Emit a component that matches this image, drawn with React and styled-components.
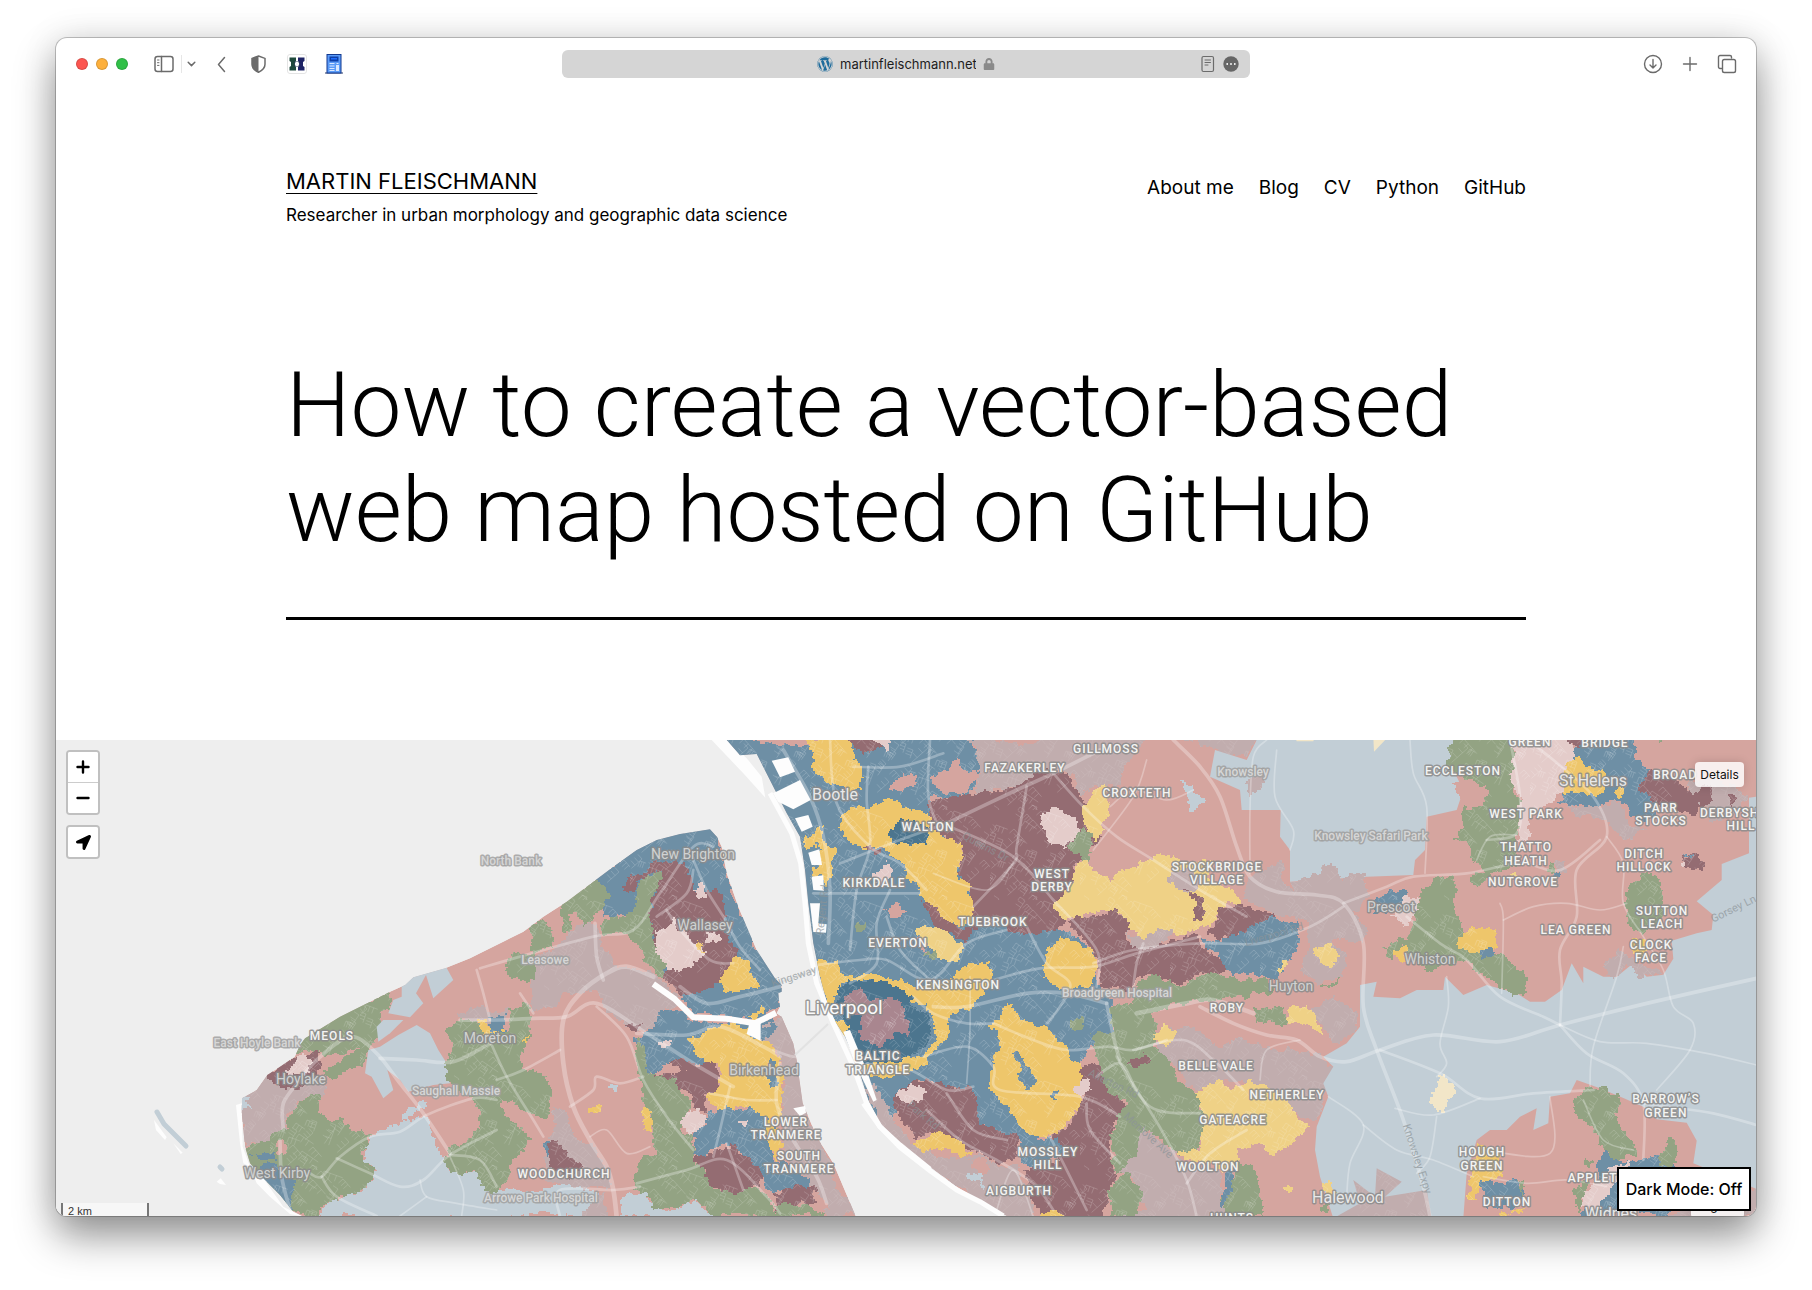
import React from "react";
import styled, { createGlobalStyle } from "styled-components";
import { FaWordpress, FaLock, FaLocationArrow } from "react-icons/fa";

const GlobalStyle = createGlobalStyle`
  * { box-sizing: border-box; }
  body { margin: 0; background: #fff; color: #000; font-family: Inter, "Liberation Sans", sans-serif; }
  button, input { font: inherit; color: inherit; }
  a { color: inherit; }
`;

/* ---------- window ---------- */

const Desktop = styled.div`
  height: 100vh;
  min-height: 900px;
  padding: 38px 56px 74px;
  display: flex;
  overflow: hidden;
`;

const Window = styled.div`
  flex: 1;
  min-width: 0;
  display: flex;
  flex-direction: column;
  background: #fff;
  border-radius: 11px;
  overflow: hidden;
  box-shadow: 0 0 0 1px rgba(0, 0, 0, 0.22), 0 20px 40px rgba(0, 0, 0, 0.42), 0 0 36px rgba(0, 0, 0, 0.1);
`;

const Toolbar = styled.div`
  flex: none;
  height: 52px;
  padding: 0 19px;
  display: grid;
  grid-template-columns: 1fr minmax(300px, 688px) 1fr;
  align-items: center;
  color: #6b6b6b;
`;

const ToolGroup = styled.div`
  display: flex;
  align-items: center;
  justify-content: ${(p) => (p.$end ? "flex-end" : "flex-start")};
  gap: ${(p) => p.$gap || 0}px;
`;

const Lights = styled.div`
  display: flex;
  gap: 8px;
  margin: 0 26px 0 1px;
`;

const Light = styled.button`
  width: 12px;
  height: 12px;
  padding: 0;
  border-radius: 50%;
  border: 1px solid rgba(0, 0, 0, 0.14);
  background: ${(p) => p.$color};
`;

const Tool = styled.button`
  width: ${(p) => p.$w || 20}px;
  height: 20px;
  padding: 0;
  border: 0;
  background: none;
  display: grid;
  place-items: center;
`;

const Divider = styled.span`
  width: 1px;
  height: 18px;
  background: #e6e6e6;
  margin: 0 5px 0 7px;
`;

const Address = styled.div`
  height: 28px;
  border-radius: 6px;
  background: #d5d5d5;
  padding: 0 11px;
  display: grid;
  grid-template-columns: 1fr auto 1fr;
  align-items: center;
`;

const AddressText = styled.div`
  grid-column: 2;
  display: flex;
  align-items: center;
  gap: 7px;
`;

const AddressInput = styled.input`
  width: 136px;
  padding: 0;
  border: 0;
  background: none;
  font-size: 13px;
  line-height: 16px;
  color: #1d1d1d;
`;

/* ---------- page ---------- */

const Wrap = styled.div`
  width: 100%;
  max-width: 1288px;
  margin: 0 auto;
  padding: 0 24px;
`;

const SiteHeader = styled(Wrap).attrs({ as: "header" })`
  padding-top: 75px;
  display: flex;
  justify-content: space-between;
`;

const SiteName = styled.a`
  display: block;
  margin-bottom: 2px;
  font-size: 22px;
  line-height: 32px;
  text-transform: uppercase;
  text-decoration: underline;
  text-decoration-thickness: 1px;
  text-underline-offset: 4px;
`;

const Tagline = styled.p`
  margin: 0;
  font-size: 17px;
  line-height: 32px;
`;

const Nav = styled.nav`
  display: flex;
  gap: 25px;
  padding-top: 8px;
  font-size: 19px;
  line-height: 30px;
  a { text-decoration: none; }
`;

const Entry = styled(Wrap)`
  padding-top: 122px;
  padding-bottom: 120px;
`;

const Title = styled.h1`
  margin: 0;
  padding-bottom: 54px;
  border-bottom: 3px solid #000;
  font-family: Roboto, "Liberation Sans", sans-serif;
  font-size: 91px;
  line-height: 105px;
  font-weight: 300;
`;

/* ---------- map ---------- */

const MapBox = styled.section`
  position: relative;
  flex: 1;
  min-height: 0;
  overflow: hidden;
  background: #eee;
`;

const MapSvg = styled.svg`
  display: block;
  width: 100%;
  height: 100%;
`;

const Controls = styled.div`
  position: absolute;
  left: 10px;
  top: 10px;
  display: grid;
  gap: 10px;
`;

const ControlGroup = styled.div`
  border: 2px solid #c0c0c0;
  border-radius: 4px;
  background: #fff;
  overflow: hidden;
`;

const Control = styled.button`
  width: 30px;
  height: 30px;
  padding: 0;
  border: 0;
  background: #fff;
  color: #000;
  display: grid;
  place-items: center;
  & + & { height: 31px; border-top: 1px solid #ccc; }
`;

const Scale = styled.div`
  position: absolute;
  left: 5px;
  bottom: -4px;
  width: 88px;
  height: 17px;
  padding: 1px 5px;
  border: 2px solid #777;
  border-top: 0;
  background: rgba(255, 255, 255, 0.5);
  font: 11px/14px "Liberation Sans", sans-serif;
  color: #333;
`;

const Chip = styled.button`
  position: absolute;
  right: 12px;
  ${(p) => (p.$low ? "bottom: -2px;" : "top: 22px;")}
  min-width: 49px;
  height: 25px;
  padding: 0 5px;
  border: 0;
  border-radius: 4px;
  background: rgba(255, 255, 255, 0.82);
  box-shadow: 0 0 10px rgba(0, 0, 0, 0.15);
  font-size: 12px;
  color: #111;
`;

const DarkMode = styled.button`
  position: absolute;
  right: 5px;
  bottom: 5px;
  width: 134px;
  height: 44px;
  padding: 0;
  border: 2px solid #000;
  background: #fff;
  font-size: 16px;
  font-weight: 500;
  white-space: nowrap;
`;

const Label = styled.text`
  font-family: Roboto, "Liberation Sans", sans-serif;
  font-size: ${(p) => ({ area: 12, town: 14, big: 16, city: 19, sea: 12, road: 11 }[p.$kind])}px;
  font-weight: ${(p) => (p.$kind === "area" || p.$kind === "sea" ? 500 : 400)};
  letter-spacing: ${(p) => (p.$kind === "area" ? "1px" : "normal")};
  fill: ${(p) => ({ area: "#f4f4f2", town: "#d0d2d2", big: "#e8e8e8", city: "#fafafa", sea: "#d6d6d6", road: "#8c9498" }[p.$kind])};
  stroke: ${(p) => ({ sea: "#a0a0a0", road: "none" }[p.$kind] || "#8b8b8b")};
  stroke-opacity: 0.85;
  stroke-width: 3px;
  stroke-linejoin: round;
  paint-order: stroke;
  text-anchor: middle;
`;

const C = {
  blue: "#6e8fa5", green: "#93a383", pink: "#d5a59f", water: "#c2ced6", mauve: "#c1adae",
  maroon: "#946c72", yellow: "#eec66b", straw: "#efd186", rose: "#e4ccca", navy: "#4c758e",
  plum: "#a9868f", cream: "#f2e6c8",
};

/* Survey sheets: origin of each sheet on the map, and units per map pixel. */
const SHEETS = { w: [50, 730, 3, 3], m: [480, 730, 3, 3], c: [800, 730, 3, 3], e: [1200, 730, 3, 3], f: [1500, 730, 3, 2.8] };

function points(sheet, text) {
  const [ox, oy, sx, sy] = SHEETS[sheet];
  return text.trim().split(/\s+/).map((p) => {
    const [x, y] = p.split(",").map(Number);
    return [ox + x / sx, oy + y / sy];
  });
}

function makeRandom(seed) {
  let s = seed * 2654435761 + 12345;
  return () => {
    s = (Math.imul(s, 1664525) + 1013904223) | 0;
    return (s >>> 0) / 4294967296;
  };
}

function outline(pts, seed) {
  const rnd = makeRandom(seed);
  const out = [];
  const split = (a, b) => {
    const dx = b[0] - a[0];
    const dy = b[1] - a[1];
    const len = Math.hypot(dx, dy);
    if (len < 3) {
      const mx = Math.round(b[0]);
      out.push([mx, Math.round(a[1])], [mx, Math.round(b[1])]);
      return;
    }
    const k = (rnd() - 0.5) * (len > 12 ? 0.18 : 0.75);
    const m = [a[0] + dx / 2 - dy * k, a[1] + dy / 2 + dx * k];
    split(a, m);
    split(m, b);
  };
  pts.forEach((p, i) => split(p, pts[(i + 1) % pts.length]));
  return "M" + out.map((p) => p.join(" ")).join("L") + "Z";
}

const plain = (pts, close = true) => "M" + pts.map((p) => p.map((n) => n.toFixed(1)).join(" ")).join("L") + (close ? "Z" : "");

function curve(pts) {
  let d = `M${pts[0][0]} ${pts[0][1]}`;
  for (let i = 0; i < pts.length - 1; i++) {
    const p0 = pts[i - 1] || pts[i];
    const p1 = pts[i];
    const p2 = pts[i + 1];
    const p3 = pts[i + 2] || p2;
    d += `C${p1[0] + (p2[0] - p0[0]) / 6} ${p1[1] + (p2[1] - p0[1]) / 6} ${p2[0] - (p3[0] - p1[0]) / 6} ${p2[1] - (p3[1] - p1[1]) / 6} ${p2[0]} ${p2[1]}`;
  }
  return d;
}

const LAND = [
  ["m", "-714,1105 -670,1080 -638,1035 -600,1010 -556,980 -540,945 -525,925 -420,860 -270,785 -225,765 -200,742 -105,715 -30,685 0,670 80,630 130,605 190,560 260,515 340,455 400,410 470,360 530,330 600,312 690,298 712,322 725,350 740,430 775,530 800,590 830,660 885,745 905,765 905,785 895,790 900,830 890,850 905,860 940,940 950,990 968,1120 1010,1220 1060,1300 1128,1460 -530,1460 -560,1445 -600,1395 -650,1345 -690,1300 -705,1250 -715,1150"],
  ["c", "-220,30 -180,76 -130,72 -80,170 -40,250 0,320 15,420 25,520 40,640 60,740 90,850 135,920 170,1000 205,1110 240,1180 300,1250 390,1310 470,1370 560,1425 625,1460 2900,1460 2900,30"],
];

const REGIONS = [
  // Wirral, west
  ["w", "mauve", "570,1100 652,1030 690,1070 790,1040 825,1060 820,1100 770,1100 740,1130 710,1165 708,1205 660,1235 583,1250 575,1150"],
  ["w", "water", "570,1108 600,1103 607,1138 578,1140"],
  ["w", "green", "725,990 755,915 890,840 1020,775 1025,810 990,870 975,940 950,970 940,1010 880,1025 850,1050 820,1020 810,960 770,960"],
  ["w", "pink", "805,990 860,965 930,955 900,975 860,1000 820,1020"],
  ["w", "maroon", "640,1035 730,985 800,960 812,1000 790,1050 710,1080 670,1060"],
  ["w", "rose", "705,1020 740,1000 755,970 790,1000 780,1030 720,1040"],
  ["w", "green", "575,1250 640,1235 680,1205 710,1205 712,1160 770,1100 810,1095 805,1150 830,1170 880,1165 900,1190 965,1215 945,1260 940,1290 975,1310 970,1350 930,1385 870,1400 820,1430 800,1465 720,1450 630,1345 585,1300"],
  ["w", "blue", "598,1273 675,1270 680,1292 630,1288"],
  ["w", "blue", "660,1300 680,1300 695,1340 735,1350 722,1400 730,1440 690,1430 620,1335 630,1318"],
  ["w", "pink", "685,1230 705,1230 712,1270 675,1272"],
  ["w", "water", "1055,755 1090,735 1185,705 1210,750 1150,805 1128,735 1098,790 1120,820 1080,862 1015,850 1030,810 1055,800", 1],
  ["w", "water", "980,890 1000,870 1060,870 1020,910 985,935", 1],
  ["w", "water", "990,950 1045,915 1100,885 1140,910 1165,960 1190,1000 1200,1060 1150,1065 1075,1085 1050,1050 1012,1020 1030,1080 1000,1105 965,1040 945,1030 955,960", 1],
  ["w", "water", "965,1215 1060,1170 1130,1160 1170,1270 1200,1325 1280,1325 1330,1365 1345,1380 1420,1385 1480,1375 1600,1365 1650,1400 1600,1465 800,1465 830,1420 930,1385 970,1350 975,1310 940,1290 945,1250"],
  ["w", "water", "1055,1165 1080,1130 1130,1120 1120,1135 1075,1160"],
  // Wirral, centre
  ["m", "mauve", "-70,850 0,830 60,850 90,830 60,900 -20,870"],
  ["m", "green", "-90,890 -60,865 0,880 10,905 80,905 85,835 145,822 150,880 155,920 120,980 140,1025 200,1040 215,1090 205,1165 165,1160 130,1140 100,1110 60,1110 60,1130 110,1190 155,1230 120,1270 80,1340 40,1395 0,1370 -10,1325 -85,1330 -110,1290 -100,1260 -40,1240 0,1180 -5,1130 -20,1100 -80,1090 -95,1020"],
  ["m", "blue", "25,860 80,850 80,905 30,905"],
  ["m", "yellow", "-8,868 20,870 30,905 75,905 10,912"],
  ["m", "mauve", "165,680 240,640 330,570 360,600 365,640 410,680 400,705 500,720 560,770 600,800 590,830 545,850 540,890 500,900 430,880 390,850 350,780 290,790 250,790 230,830 150,840 155,780"],
  ["m", "green", "80,690 110,665 160,670 165,750 100,755 80,730"],
  ["m", "green", "240,510 345,450 395,480 380,530 340,560 310,590 290,545 265,545 275,600 250,605"],
  ["m", "green", "150,590 190,565 215,620 220,655 155,662"],
  ["m", "blue", "345,450 470,340 600,300 700,280 740,430 775,530 830,660 920,745 905,785 900,830 830,870 740,860 640,845 600,790 560,740 500,640 460,560 370,560 390,490"],
  ["m", "green", "365,580 460,545 470,490 480,450 530,420 560,440 530,480 515,540 530,640 560,690 550,745 500,700 470,640 430,610 365,625"],
  ["m", "maroon", "430,480 440,440 490,430 510,400 590,395 640,440 650,490 710,475 735,550 730,590 760,650 770,680 730,740 700,780 640,790 600,795 550,740 570,700 530,650 520,590 505,545 525,490 550,440 530,420 480,450 465,485"],
  ["m", "rose", "525,600 560,590 580,562 600,600 650,640 680,670 640,700 600,725 560,710 530,650"],
  ["m", "rose", "680,600 720,610 710,640 680,640"],
  ["m", "rose", "640,480 655,460 680,505 650,490"],
  ["m", "yellow", "720,740 760,680 800,690 840,770 780,785 730,780"],
  ["m", "yellow", "650,630 668,640 675,668 660,660"],
  ["m", "blue", "540,840 610,835 620,870 700,880 880,870 900,900 840,935 700,1000 560,1000 500,1040 490,960 460,920 520,890"],
  ["m", "yellow", "805,860 850,820 855,840 830,870"],
  ["m", "maroon", "430,885 490,880 470,905"],
  ["m", "mauve", "845,885 915,850 950,940 980,1120 1010,1220 1150,1465 1040,1455 1000,1370 920,1280 900,1180 910,1050 890,960 840,935"],
  ["m", "blue", "840,905 870,880 900,890 850,935"],
  ["m", "yellow", "620,925 700,890 750,880 800,895 810,920 880,940 890,980 905,1010 915,1050 905,1120 900,1180 830,1160 800,1130 730,1140 690,1120 680,1090 720,1060 720,1010 680,995 640,960"],
  ["m", "blue", "855,1010 870,985 885,1010 905,1060 870,1070"],
  ["m", "rose", "535,935 575,935 550,955"],
  ["m", "green", "470,1000 475,920 500,1030 580,1045 600,1085 640,1110 620,1150 600,1200 640,1220 640,1290 700,1370 830,1375 880,1410 890,1465 700,1465 650,1410 600,1430 520,1440 500,1400 460,1380 480,1290 530,1260 510,1170 490,1060"],
  ["m", "maroon", "520,1040 590,1028 620,1020 560,1000 600,985 640,1000 700,1000 720,1040 710,1080 670,1090 680,1150 640,1130 630,1090 600,1080 590,1045"],
  ["m", "blue", "640,1210 680,1180 690,1140 820,1140 880,1180 880,1290 920,1300 990,1350 980,1380 870,1380 800,1290 740,1240 660,1290 640,1270"],
  ["m", "rose", "600,1180 620,1145 660,1140 680,1170 670,1190 630,1215"],
  ["m", "rose", "770,1180 810,1170 800,1185"],
  ["m", "yellow", "860,1170 895,1200 910,1240 890,1300 875,1260"],
  ["m", "maroon", "640,1290 700,1275 750,1238 800,1280 850,1340 840,1370 760,1390 700,1370"],
  ["m", "maroon", "880,1390 1000,1365 1010,1420 950,1430 900,1450"],
  ["m", "green", "880,1420 960,1430 1030,1440 1030,1465 880,1465"],
  ["m", "pink", "1000,1380 1020,1400 1050,1440 1030,1440"],
  ["m", "mauve", "200,1250 230,1180 220,1130 260,1150 290,1230 340,1250 380,1310 380,1380 330,1370 200,1360 190,1280"],
  ["m", "maroon", "200,1240 230,1230 250,1260 310,1310 270,1350 205,1310"],
  ["m", "blue", "190,1240 210,1230 200,1280"],
  ["m", "yellow", "490,1130 515,1150 515,1205 490,1200"],
  ["m", "yellow", "325,1135 365,1130 345,1150"],
  ["m", "yellow", "125,935 150,915 140,940"],
  ["m", "water", "385,1068 412,1065 405,1087"],
  ["m", "water", "430,1400 500,1390 520,1440 650,1410 700,1465 420,1465"],
  ["m", "mauve", "310,1465 340,1400 375,1390 380,1465"],
  // Liverpool
  ["c", "blue", "-240,20 505,20 550,110 500,200 390,200 470,380 520,600 620,560 760,600 830,620 890,680 890,760 940,820 945,910 870,950 840,1010 700,1250 560,1200 500,1080 350,1050 290,1150 240,1190 150,1000 70,850 20,640 0,420 -60,250"],
  ["c", "mauve", "505,20 1040,20 1000,80 950,170 900,170 840,200 820,130 760,125 640,170 520,200 540,110"],
  ["c", "pink", "390,140 450,110 470,85 490,120 540,120 500,190 430,190"],
  ["c", "maroon", "385,210 540,185 640,170 700,130 800,130 830,180 850,220 900,330 830,400 820,460 760,530 800,570 760,600 700,610 620,600 610,560 520,600 500,530 510,480 470,430 490,350 400,300"],
  ["c", "rose", "720,255 770,235 830,260 840,310 800,355 740,330"],
  ["c", "straw", "845,240 890,175 920,170 915,300 890,335 860,300"],
  ["c", "green", "805,350 850,290 880,320 875,370 850,395"],
  ["c", "straw", "830,400 860,390 930,455 1040,390 1080,370 1120,375 1150,400 1240,390 1230,450 1300,480 1340,540 1280,520 1240,580 1160,605 1030,635 990,600 960,550 900,545 800,570 760,530 820,460"],
  ["c", "mauve", "1100,440 1160,410 1200,460 1180,485 1140,480"],
  ["c", "maroon", "1150,480 1200,500 1210,570 1180,570 1190,520"],
  ["c", "maroon", "800,570 940,540 980,570 990,640 1080,640 1180,610 1200,640 1270,690 1280,720 1220,730 1140,770 1060,735 1010,745 990,780 900,770 890,680 850,620"],
  ["c", "mauve", "980,600 1030,630 1070,595 1120,610 1060,650 1000,655"],
  ["c", "maroon", "360,510 400,520 470,590 515,600 500,640 460,610 400,580"],
  ["c", "yellow", "-5,20 150,20 160,90 190,110 185,180 160,185 100,160 45,130 40,70"],
  ["c", "maroon", "145,20 240,20 250,50 190,80 170,60"],
  ["c", "rose", "205,20 265,20 260,65"],
  ["c", "pink", "270,165 310,130 350,130 350,160 310,185 270,180"],
  ["c", "yellow", "120,260 150,230 230,225 260,205 300,220 390,260 400,300 490,350 470,430 510,480 515,580 480,590 430,560 370,500 360,470 315,440 310,400 250,350 200,360 150,340 120,300"],
  ["c", "navy", "265,310 300,265 390,290 380,345 320,340 280,340"],
  ["c", "maroon", "190,352 250,352 222,370"],
  ["c", "yellow", "50,290 70,285 75,340 110,360 100,390 80,470 60,400"],
  ["c", "yellow", "15,315 45,310 50,355 20,360"],
  ["c", "yellow", "35,410 75,405 75,435 38,438"],
  ["c", "rose", "215,430 250,415 260,390 275,430 250,475 220,465"],
  ["c", "pink", "250,540 290,515 320,545 290,565"],
  ["c", "green", "170,575 200,575 185,605"],
  ["c", "straw", "345,600 390,585 430,600 490,650 475,695 420,685 380,650"],
  ["c", "pink", "350,620 385,640 380,675 355,650"],
  ["c", "green", "370,675 405,660 405,690"],
  ["c", "yellow", "40,700 110,690 120,730 230,735 300,745 340,770 450,745 515,700 570,700 575,760 540,800 500,840 445,870 440,930 400,970 390,1000 330,1025 240,1040 210,1040 180,1000 360,980 400,940 400,880 380,820 340,820 300,780 200,750 130,760 100,800 90,840 60,780"],
  ["c", "navy", "110,780 160,750 240,750 340,800 340,830 385,850 385,940 340,970 290,1000 170,1000 150,940 130,870 115,840"],
  ["c", "plum", "130,820 180,770 215,810 300,810 320,870 325,920 290,905 250,950 190,940 175,900 190,860 140,840"],
  ["c", "yellow", "85,860 150,890 125,920"],
  ["c", "yellow", "740,650 800,625 880,660 890,700 870,770 800,785 730,740"],
  ["c", "green", "810,870 850,860 845,900 815,895"],
  ["c", "yellow", "565,885 600,860 620,820 660,870 740,890 800,950 810,990 870,1030 850,1080 840,1130 780,1200 740,1225 690,1215 650,1170 600,1110 565,1070 585,1000 600,930 585,895"],
  ["c", "blue", "635,970 660,965 680,1010 710,1050 690,1080 650,1050 660,1010"],
  ["c", "blue", "750,1095 775,1080 770,1110"],
  ["c", "mauve", "190,1080 240,1190 300,1270 390,1330 600,1465 700,1465 690,1400 660,1310 600,1310 540,1270 430,1280 330,1230 280,1170 225,1060"],
  ["c", "maroon", "280,1100 340,1050 400,1060 500,1065 530,1110 530,1160 560,1190 600,1190 650,1215 650,1280 600,1310 540,1260 460,1250 400,1210 350,1230 300,1170"],
  ["c", "rose", "285,1100 330,1060 380,1075 370,1100 320,1120"],
  ["c", "blue", "530,1140 570,1115 620,1140 660,1200 625,1215 585,1190 545,1185"],
  ["c", "yellow", "340,1240 430,1205 470,1230 520,1270 480,1280 440,1255 370,1270"],
  ["c", "pink", "505,1290 550,1280 570,1320 540,1340"],
  ["c", "water", "500,1330 540,1330 550,1380"],
  ["c", "maroon", "845,1010 900,990 920,1060 980,1130 950,1170 930,1260 950,1340 920,1400 900,1465 740,1465 690,1400 670,1320 780,1290 740,1225 800,1190 850,1110"],
  ["c", "blue", "660,1240 770,1220 790,1270 700,1310 665,1300"],
  ["c", "rose", "820,1075 860,1045 875,1080 840,1095"],
  ["c", "yellow", "720,1455 760,1440 800,1465 720,1465"],
  ["c", "green", "870,910 945,905 930,830 1000,820 1010,760 1060,735 1140,770 1220,730 1400,740 1420,790 1280,800 1060,850 1070,900 1060,950 1110,980 1130,1050 1200,1100 1210,1200 1180,1270 1130,1270 1050,1200 1020,1270 960,1330 930,1290 950,1170 980,1130 910,1050 890,980"],
  ["c", "maroon", "980,1000 1030,965 1050,1000 1000,1010"],
  ["c", "mauve", "1065,940 1110,890 1180,890 1250,950 1320,920 1410,960 1550,970 1580,1010 1610,1010 1570,1100 1550,1170 1480,1150 1330,1050 1200,1085 1170,1070 1120,1000"],
  ["c", "straw", "1060,930 1090,880 1130,910 1100,950"],
  ["c", "mauve", "1030,1190 1100,1250 1150,1300 1260,1330 1280,1465 930,1465 1040,1440 1000,1350 960,1330 1010,1270"],
  ["c", "green", "920,1380 980,1320 1030,1400 1000,1465 930,1465"],
  ["c", "straw", "1180,1090 1260,1050 1290,1080 1340,1050 1400,1070 1460,1110 1500,1170 1530,1190 1480,1240 1415,1275 1380,1240 1310,1260 1320,1290 1270,1335 1220,1300 1130,1270 1200,1260 1210,1200 1200,1120"],
  ["c", "green", "1270,1400 1310,1290 1360,1310 1380,1390 1390,1465 1270,1465"],
  ["c", "blue", "1265,1400 1280,1320 1310,1320 1300,1380 1260,1440"],
  // Knowsley
  ["e", "mauve", "-60,20 180,20 140,80 0,45"],
  ["e", "water", "175,20 765,20 750,100 790,180 770,240 680,260 675,360 645,390 640,435 500,440 270,455 270,360 240,320 242,240 125,240 120,180 30,140 45,60 140,90", 1],
  ["e", "mauve", "135,160 175,120 200,130 195,160 150,200"],
  ["c", "water", "1140,150 1175,165 1180,190 1215,205 1175,245 1165,200"],
  ["e", "cream", "520,20 565,20 522,65", 1],
  ["e", "cream", "285,20 345,20 340,34 290,34", 1],
  ["e", "mauve", "150,440 245,390 250,455 290,490 270,455 390,400 430,450 490,420 510,500 460,545 500,600 490,640 400,630 440,680 430,740 350,770 300,720 310,690 320,570 250,560 180,530 130,510"],
  ["e", "maroon", "20,610 60,530 130,530 220,550 210,590 120,610 60,635"],
  ["e", "blue", "-10,620 60,635 140,600 220,560 300,580 295,650 260,700 225,750 150,730 80,720 60,680"],
  ["e", "straw", "340,655 380,640 420,680 400,710 360,700"],
  ["e", "straw", "230,720 245,690 260,690 240,735"],
  ["e", "green", "360,770 420,740 400,770"],
  ["e", "green", "160,830 250,830 262,885 170,880"],
  ["e", "mauve", "320,840 400,795 470,850 470,900 410,940 370,890"],
  ["e", "straw", "260,840 320,825 360,890 370,915 300,880 265,880"],
  ["e", "water", "480,765 530,755 520,800 600,805 650,780 730,780 735,740 790,795 860,765 950,790 990,815 1035,815 1085,780 1115,700 1150,760 1150,710 1210,740 1250,740 1300,700 1340,740 1390,734 1420,686 1415,632 1490,610 1535,600 1540,555 1490,514 1565,450 1565,402 1647,370 1647,203 1690,198 1690,1385 1480,1300 1490,1232 1460,1178 1370,1168 1330,1130 1270,1104 1200,1075 1130,1050 1110,1090 1050,1100 1045,1180 1000,1200 1010,1135 960,1160 920,1200 870,1200 830,1230 800,1330 790,1465 400,1465 360,1340 345,1260 350,1190 385,1100 370,1060 400,1010 370,980 440,940 480,890", 1],
  ["e", "cream", "715,1035 750,1060 775,1085 740,1110 735,1150 710,1140 690,1120 705,1080"],
  ["e", "mauve", "460,1350 525,1400 530,1315 605,1355 555,1400 680,1380 695,1465 400,1465 480,1420", 1],
  ["e", "straw", "365,1360 400,1360 410,1385 380,1395"],
  ["e", "straw", "250,1370 280,1375 265,1390"],
  ["e", "green", "360,1430 390,1425 385,1450"],
  // St Helens
  ["e", "green", "760,20 940,20 950,110 940,180 965,230 960,290 945,320 950,410 870,430 820,400 805,340 760,325 790,280 790,230 810,190 800,160 745,110"],
  ["e", "pink", "755,160 800,150 860,180 850,220 800,240"],
  ["e", "green", "810,440 870,425 850,460 820,460"],
  ["e", "rose", "945,20 1110,20 1130,70 1100,170 1060,220 1000,240 985,330 950,330 960,220 935,160"],
  ["e", "blue", "1130,20 1305,20 1310,90 1350,120 1330,180 1370,210 1370,260 1330,280 1290,240 1240,210 1190,235 1130,225 1070,215 1110,170 1120,80"],
  ["e", "maroon", "1105,20 1150,20 1140,55"],
  ["e", "yellow", "1115,90 1140,80 1160,110 1220,130 1215,180 1190,200 1130,190 1090,185"],
  ["e", "yellow", "1245,180 1275,165 1265,205"],
  ["e", "mauve", "1100,230 1200,235 1260,215 1300,290 1340,300 1280,330 1220,270 1130,260"],
  ["f", "maroon", "415,160 450,108 500,120 560,170 630,150 645,190 580,240 520,220 470,200"],
  ["f", "mauve", "560,150 640,130 700,150 740,200 700,240 640,260 600,210"],
  ["f", "maroon", "570,180 630,155 640,200 610,220"],
  ["f", "maroon", "685,180 712,185 695,215"],
  ["f", "green", "425,20 510,20 480,36"],
  ["e", "blue", "520,510 560,490 620,485 640,520 590,540 520,550"],
  ["e", "rose", "600,500 650,500 660,560 610,590 570,555 600,535"],
  ["e", "green", "660,490 700,450 765,435 760,520 790,620 830,660 900,670 975,740 980,790 940,800 880,750 800,690 770,700 680,725 640,680 610,640 640,580"],
  ["e", "green", "545,650 600,620 630,640 580,690"],
  ["e", "yellow", "580,660 620,650 610,700"],
  ["e", "yellow", "775,620 820,590 880,600 895,655 820,670 775,650"],
  ["e", "blue", "840,660 880,650 870,680 845,690"],
  ["e", "straw", "925,435 945,420 960,440"],
  ["e", "green", "1045,395 1060,400 1065,430 1040,425"],
  ["e", "mauve", "1065,390 1095,395 1100,430 1075,440"],
  ["e", "blue", "1062,428 1082,425 1075,442"],
  ["f", "green", "385,440 420,405 465,400 490,470 480,540 430,575 390,550"],
  ["f", "mauve", "310,660 360,610 400,640 410,655 490,680 415,695 390,660 350,690 315,690"],
  ["f", "yellow", "390,590 440,590 440,635 400,625"],
  ["f", "maroon", "545,350 580,345 610,370 610,395 560,385"],
  ["f", "rose", "533,380 550,370 552,392"],
  ["f", "blue", "545,348 580,346 575,358"],
  // Widnes
  ["e", "green", "1120,1110 1150,1080 1220,1075 1265,1110 1250,1170 1290,1230 1310,1280 1240,1290 1180,1200 1120,1150"],
  ["e", "blue", "1195,1290 1215,1255 1240,1290 1400,1280 1450,1330 1400,1465 1130,1465 1200,1380"],
  ["e", "rose", "1150,1380 1230,1310 1290,1290 1260,1340 1220,1400 1180,1440 1140,1420"],
  ["e", "green", "1125,1430 1130,1370 1160,1350 1140,1450"],
  ["e", "green", "1155,1285 1185,1290 1170,1320"],
  ["f", "green", "470,1200 510,1140 540,1180 520,1220 480,1220"],
  ["e", "yellow", "830,1240 900,1260 910,1340 850,1350 830,1410 800,1400 815,1330"],
  ["e", "blue", "840,1350 950,1350 970,1400 930,1440 860,1440"],
  ["e", "green", "950,1350 975,1370 970,1400"],
  ["e", "yellow", "900,1462 980,1430 970,1450"],
  ["e", "mauve", "1400,1465 1550,1400 1690,1375 1690,1465"],
];

const ROADS = [
  ["e", 3, "-80,30 0,110 60,200 110,350 150,440 230,485 350,495 430,520 490,640 490,830 530,960 610,1170 670,1370 690,1460"],
  ["e", 3, "0,830 100,880 200,915 290,930 360,980 440,995 540,960 700,915 900,935 1080,885 1340,820 1670,745"],
  ["e", 2, "540,960 720,1030 840,1105 1000,1090 1180,1080"],
  ["e", 2, "430,520 560,470 640,440 800,430 960,400 1080,420 1200,330"],
  ["e", 2, "430,530 330,590 180,640 0,640 -200,660 -320,700"],
  ["e", 2, "1080,885 1085,760 1080,660 1130,560 1130,420 1220,320 1180,200 1060,90 980,30"],
  ["e", 2, "1080,885 1160,970 1270,1030 1330,1120 1330,1290"],
  ["e", 1, "1080,885 1200,935 1340,940 1520,970 1670,1005"],
  ["e", 1, "1170,1070 1180,950 1250,740 1270,650"],
  ["e", 2, "1670,1185 1540,1150 1400,1130 1330,1120"],
  ["e", 1, "1220,320 1270,400 1270,520 1330,620 1390,720 1420,830 1480,880 1470,960 1370,1080"],
  ["e", 1, "910,570 1000,530 1100,520 1200,540 1280,520"],
  ["e", 1, "905,790 910,570 900,520"],
  ["e", 2, "620,560 720,640 800,690 900,800 1030,860 1080,885"],
  ["e", 1, "630,30 640,130 680,230 675,430"],
  ["e", 1, "740,740 745,830 720,940 740,1000 710,1040"],
  ["e", 1, "200,30 160,80 150,240 150,430"],
  ["e", 1, "230,60 225,200 280,300 270,360"],
  ["e", 1, "385,1100 490,1185 450,1300 440,1400"],
  ["e", 1, "490,1185 590,1260 700,1290 820,1340"],
  ["e", 1, "585,1135 700,1155 840,1105"],
  ["e", 1, "710,1160 690,1280 650,1330"],
  ["e", 2, "860,330 950,310 960,200 930,30"],
  ["e", 1, "830,390 870,320 950,315"],
  ["e", 1, "850,1260 1050,1270 1050,1100"],
  ["e", 1, "850,1340 980,1360 1100,1350 1220,1370"],
  ["e", 1, "1150,1110 1210,1230 1300,1260"],
  ["c", 3, "440,280 650,180 760,130 900,60"],
  ["c", 2, "450,290 640,380 760,510 890,660 890,770"],
  ["c", 2, "680,170 650,350 640,400 520,530"],
  ["c", 2, "120,400 300,330 440,280"],
  ["c", 1, "400,430 560,480 640,400"],
  ["c", 2, "760,130 850,230 950,320 1060,390 1200,480 1340,560"],
  ["c", 1, "930,230 1000,180 1100,210 1180,180"],
  ["c", 1, "880,360 1000,200 1040,90"],
  ["c", 3, "-50,60 30,200 70,320 90,480 85,640"],
  ["c", 2, "90,30 110,220 210,350 300,400 380,480"],
  ["c", 2, "160,110 300,110 430,70"],
  ["c", 2, "205,110 200,210 210,350 170,480 150,660"],
  ["c", 2, "390,30 385,200 420,300"],
  ["c", 2, "270,480 230,580 230,700 150,760"],
  ["c", 2, "40,490 250,490 360,490"],
  ["c", 2, "50,705 180,690 260,690 390,750 500,640 620,600"],
  ["c", 2, "260,560 300,660 390,750"],
  ["c", 3, "400,830 500,830 680,790 800,790 920,820"],
  ["c", 3, "920,820 945,940 960,990"],
  ["c", 2, "580,750 720,715 880,710 1010,670 1200,620"],
  ["c", 2, "340,800 400,850 500,880 580,880"],
  ["c", 1, "510,740 510,900 500,1060"],
  ["c", 2, "580,880 700,930 800,960 920,950 1000,960 1100,930"],
  ["c", 2, "680,590 740,700 810,760 780,830 740,880"],
  ["c", 2, "370,980 500,950 580,1010 600,1080 840,1100 960,1160"],
  ["c", 2, "200,1000 330,1020 440,1080 520,1070"],
  ["c", 2, "440,1090 520,1200 620,1230"],
  ["c", 2, "380,1140 480,1230 590,1290 700,1360 760,1440"],
  ["c", 2, "750,1220 810,1340 860,1440"],
  ["c", 2, "860,1120 870,1200 960,1300"],
  ["c", 2, "950,980 1050,1130 1200,1150"],
  ["c", 2, "890,1040 960,1000 1010,1080 1090,1210 1160,1350 1190,1460"],
  ["c", 2, "1160,1360 1230,1270 1340,1200"],
  ["c", 1, "590,1440 640,1320 700,1460"],
  ["c", 4, "1010,850 1160,820 1240,810 1360,850"],
  ["c", 2, "1000,770 1010,700 1030,640"],
  ["c", 2, "1000,960 1150,930 1250,1000 1330,1080"],
  ["c", 1, "1380,1050 1400,960 1500,930"],
  ["m", 3, "-60,870 60,870 160,865 260,860 350,820 500,910 640,1000 760,1070"],
  ["m", 4, "520,740 440,710 380,730 300,790 250,870 250,1000 280,1130 330,1230 380,1310 400,1380 410,1460"],
  ["m", 2, "0,715 120,680 340,620 460,600 540,490 640,350 700,350"],
  ["m", 3, "345,580 350,680 370,750"],
  ["m", 3, "600,770 680,820 780,800 900,770"],
  ["m", 2, "640,390 680,480 730,560 780,650 840,720"],
  ["m", 2, "560,540 600,600 690,690 760,700"],
  ["m", 2, "530,560 620,490 640,420"],
  ["m", 2, "350,830 440,920 490,1050 560,1160 640,1260"],
  ["m", 3, "470,910 620,915 720,890 850,950 900,980"],
  ["m", 2, "20,910 80,1040 160,1170 190,1220"],
  ["m", 2, "50,1050 130,1020 240,960"],
  ["m", 2, "270,1130 340,1080 350,1040 420,1060 490,1040"],
  ["m", 1, "330,1220 380,1200 440,1270 510,1250"],
  ["m", 2, "750,1070 720,1200 700,1280"],
  ["m", 3, "900,1000 890,1120 940,1230 1010,1340 1040,1420"],
  ["m", 2, "690,1090 800,1110 890,1110"],
  ["m", 2, "470,1360 620,1320 740,1290 860,1400 900,1450"],
  ["m", 2, "740,1240 790,1380"],
  ["m", 2, "120,790 160,850"],
  ["m", 2, "1000,980 940,980 880,960"],
  ["m", 2, "240,1460 240,1380 400,1380 480,1370"],
  ["w", 3, "700,1200 700,1120 750,1050 800,990 900,920 980,970 1050,1060 1120,1150 1200,1270"],
  ["w", 3, "690,1230 695,1340 720,1440"],
  ["w", 2, "780,1330 815,1340 870,1280 960,1220 1050,1205 1130,1155 1270,1105 1340,1110"],
  ["w", 2, "815,1340 860,1400 980,1458"],
  ["w", 2, "860,1285 960,1330 1050,1370 1120,1350 1200,1275 1340,1200"],
  ["w", 3, "990,985 1100,990 1210,995 1320,940"],
  ["w", 2, "1280,720 1300,790 1320,870"],
  ["w", 1, "1110,1350 1130,1400 1220,1420 1340,1440"],
  ["w", 1, "1050,1458 1130,1400"],
  ["w", 1, "1200,1280 1240,1380 1235,1458"],
  ["w", 2, "1340,1370 1290,1290 1200,1275"],
];

const WHITE = [
  ["m", "695,30 740,30 800,85 845,140 856,203 790,130"],
  ["m", "830,60 850,65 940,130 905,150 860,110"],
  ["m", "775,30 895,30 880,42 800,42"],
  ["m", "875,92 925,82 945,125 900,142"],
  ["m", "880,190 960,150 992,210 940,238 895,215"],
  ["m", "945,265 985,255 998,290 965,305"],
  ["m", "985,368 1018,358 1026,405 995,405"],
  ["m", "995,440 1030,436 1032,482 1000,480"],
  ["m", "990,520 1020,520 1015,580 1040,583 1038,608 1000,606"],
  ["m", "1090,905 1110,900 1160,1020 1190,1110 1180,1115 1130,1010"],
  ["m", "810,872 842,872 842,933 800,912"],
  ["m", "940,1135 975,1128 978,1148 960,1158"],
  ["w", "558,1125 575,1120 578,1250 600,1310 580,1300 570,1240"],
  ["w", "600,1310 640,1345 700,1430 760,1460 720,1452 660,1400 620,1360"],
  ["w", "312,1170 350,1222 345,1230 318,1200"],
  ["w", "370,1240 398,1268 392,1272"],
  ["w", "500,1355 512,1345 528,1365 510,1362"],
];

const WHITE_LINES = [
  ["m", 5, "870,190 935,310 962,400 975,520 985,640 1010,760 1060,880 1120,1010 1160,1120 1200,1190 1260,1245 1350,1318"],
  ["c", 5, "190,1120 240,1190 300,1252 390,1322 470,1380 540,1415 610,1458"],
  ["m", 6, "520,762 585,808 640,862 740,866 825,880 888,848"],
];

const LABELS = [
  ["area", 332, 1040, "MEOLS"], ["sea", 257, 1047, "East Hoyle Bank"], ["town", 301, 1084, "Hoylake"],
  ["town", 277, 1178, "West Kirby"], ["sea", 456, 1095, "Saughall Massie"], ["sea", 511, 865, "North Bank"],
  ["town", 693, 859, "New Brighton"], ["town", 705, 930, "Wallasey"], ["sea", 545, 964, "Leasowe"],
  ["town", 490, 1043, "Moreton"], ["town", 764, 1075, "Birkenhead"], ["area", 786, 1126, "LOWER"],
  ["area", 786, 1139, "TRANMERE"], ["area", 799, 1160, "SOUTH"], ["area", 799, 1173, "TRANMERE"],
  ["area", 564, 1178, "WOODCHURCH"], ["sea", 541, 1202, "Arrowe Park Hospital"], ["big", 835, 800, "Bootle"],
  ["city", 844, 1014, "Liverpool"], ["area", 878, 1060, "BALTIC"], ["area", 878, 1074, "TRIANGLE"],
  ["area", 874, 887, "KIRKDALE"], ["area", 898, 947, "EVERTON"], ["area", 928, 831, "WALTON"],
  ["area", 958, 989, "KENSINGTON"], ["area", 1025, 772, "FAZAKERLEY"], ["area", 1106, 753, "GILLMOSS"],
  ["area", 1137, 797, "CROXTETH"], ["area", 1052, 878, "WEST"], ["area", 1052, 891, "DERBY"],
  ["area", 993, 926, "TUEBROOK"], ["sea", 1117, 997, "Broadgreen Hospital"], ["area", 1227, 1012, "ROBY"],
  ["area", 1216, 1070, "BELLE VALE"], ["area", 1233, 1124, "GATEACRE"], ["area", 1208, 1171, "WOOLTON"],
  ["area", 1048, 1156, "MOSSLEY"], ["area", 1048, 1169, "HILL"], ["area", 1019, 1195, "AIGBURTH"],
  ["area", 1232, 1222, "HUNTS"], ["area", 1217, 871, "STOCKBRIDGE"], ["area", 1217, 884, "VILLAGE"],
  ["area", 1287, 1099, "NETHERLEY"], ["big", 1348, 1203, "Halewood"], ["town", 1291, 991, "Huyton"],
  ["town", 1391, 912, "Prescot"], ["town", 1430, 964, "Whiston"], ["sea", 1243, 776, "Knowsley"],
  ["sea", 1371, 840, "Knowsley Safari Park"], ["area", 1463, 775, "ECCLESTON"], ["area", 1526, 818, "WEST PARK"],
  ["area", 1526, 851, "THATTO"], ["area", 1526, 865, "HEATH"], ["area", 1523, 886, "NUTGROVE"],
  ["area", 1576, 934, "LEA GREEN"], ["big", 1593, 786, "St Helens"], ["area", 1530, 746, "GREEN"],
  ["area", 1605, 747, "BRIDGE"], ["area", 1675, 779, "BROAD"], ["area", 1661, 812, "PARR"],
  ["area", 1661, 825, "STOCKS"], ["area", 1740, 817, "DERBYSHIRE"], ["area", 1741, 830, "HILL"],
  ["area", 1644, 858, "DITCH"], ["area", 1644, 871, "HILLOCK"], ["area", 1662, 915, "SUTTON"],
  ["area", 1662, 928, "LEACH"], ["area", 1651, 949, "CLOCK"], ["area", 1651, 962, "FACE"],
  ["area", 1666, 1103, "BARROW’S"], ["area", 1666, 1117, "GREEN"], ["area", 1602, 1182, "APPLETON"],
  ["area", 1482, 1156, "HOUGH"], ["area", 1482, 1170, "GREEN"], ["area", 1507, 1206, "DITTON"],
  ["big", 1611, 1219, "Widnes"],
];

const ROAD_NAMES = [
  [795, 980, -18, "Kingsway"], [984, 850, 28, "Queens Dr"], [1275, 938, -16, "Liverpool Rd"],
  [1146, 1138, 42, "Menlove Ave"], [1414, 1160, 72, "Knowsley Expy"], [1735, 912, -26, "Gorsey Ln"],
  [826, 910, -84, "Regent Rd"], [1112, 1087, 25, "Allerton Rd"], [921, 1118, 40, "Park Rd"],
];

const TEXTURED = { blue: 0.9, green: 0.8, maroon: 0.9, yellow: 0.9, straw: 0.7, rose: 0.9, plum: 1, navy: 0.8, mauve: 0.4 };

function streets(size, seed) {
  const rnd = makeRandom(seed);
  let d = "";
  for (let i = 0; i < 46; i++) {
    const x = Math.round(rnd() * size);
    const y = Math.round(rnd() * size);
    const a = (rnd() > 0.5 ? 0.35 : 1.92) + Math.floor(rnd() * 3) * 0.25;
    const l = 6 + rnd() * 16;
    const ex = x + Math.cos(a) * l;
    const ey = y + Math.sin(a) * l;
    d += `M${x} ${y}L${ex.toFixed(1)} ${ey.toFixed(1)}`;
    for (let k = 0; k < 3; k++) {
      const t = k / 3;
      const bx = x + (ex - x) * t;
      const by = y + (ey - y) * t;
      d += `M${bx.toFixed(1)} ${by.toFixed(1)}l${(-Math.sin(a) * 6).toFixed(1)} ${(Math.cos(a) * 6).toFixed(1)}`;
    }
  }
  return d;
}

function AreaMap() {
  const shapes = REGIONS.map(([sheet, kind, text, smooth], i) => {
    const pts = points(sheet, text);
    return { kind, d: smooth ? plain(pts) : outline(pts, i + 7) };
  });
  return (
    <MapSvg viewBox="56 740 1700 476" preserveAspectRatio="xMidYMin slice" role="img" aria-label="Map of Liverpool and surroundings">
      <defs>
        <clipPath id="land">
          {LAND.map(([s, t]) => <path key={s} d={plain(points(s, t))} />)}
        </clipPath>
        <pattern id="streets" width="90" height="90" patternUnits="userSpaceOnUse">
          <path d={streets(90, 5)} stroke="#fff" strokeOpacity="0.26" strokeWidth="0.7" fill="none" />
        </pattern>
      </defs>
      <rect x="56" y="740" width="1700" height="476" fill="#eee" />
      <g fill="#fdfdfd">
        {WHITE.map(([s, t], i) => <path key={i} d={plain(points(s, t))} />)}
      </g>
      <g clipPath="url(#land)">
        {LAND.map(([s, t]) => <path key={s} d={plain(points(s, t))} fill={C.pink} />)}
        {shapes.map(({ kind, d }, i) => (
          <g key={i}>
            <path d={d} fill={C[kind]} />
            {TEXTURED[kind] && <path d={d} fill="url(#streets)" opacity={TEXTURED[kind]} />}
          </g>
        ))}
        <g fill="none" stroke="#fff" strokeOpacity="0.29" strokeLinecap="round">
          {ROADS.map(([s, w, t], i) => <path key={i} d={curve(points(s, t))} strokeWidth={w + 0.7} />)}
        </g>
      </g>
      <g fill="#fdfdfd">
        {WHITE.slice(3, 12).map(([s, t], i) => <path key={i} d={plain(points(s, t))} />)}
      </g>
      <g fill="none" stroke="#fdfdfd" strokeLinejoin="round">
        {WHITE_LINES.map(([s, w, t], i) => <path key={i} d={plain(points(s, t), false)} strokeWidth={w} />)}
      </g>
      <g stroke={C.water} strokeLinecap="round" fill="none" strokeWidth="5">
        <path d="M157 1112L164 1124L186 1146" />
        <path d="M220 1167L222 1169" />
      </g>
      <path d="M781 982L815 970M795 1055L828 1024" stroke="#e2e2e2" strokeWidth="2" />
      {ROAD_NAMES.map(([x, y, a, t]) => (
        <Label key={t} $kind="road" x={x} y={y} opacity="0.7" transform={`rotate(${a} ${x} ${y})`}>{t}</Label>
      ))}
      {LABELS.map(([kind, x, y, t], i) => <Label key={i} $kind={kind} x={x} y={y}>{t}</Label>)}
    </MapSvg>
  );
}

/* ---------- icons ---------- */

const Line = ({ w = 20, h = 20, sw = 1.5, children }) => (
  <svg width={w} height={h} viewBox={`0 0 ${w} ${h}`} fill="none" stroke="currentColor" strokeWidth={sw} strokeLinecap="round" strokeLinejoin="round" aria-hidden="true">
    {children}
  </svg>
);

export default function App() {
  return (
    <>
      <GlobalStyle />
      <Desktop>
        <Window>
          <Toolbar>
            <ToolGroup>
              <Lights>
                <Light $color="#fc5650" aria-label="Close" />
                <Light $color="#fdb03c" aria-label="Minimise" />
                <Light $color="#30c048" aria-label="Zoom window" />
              </Lights>
              <Tool aria-label="Sidebar">
                <Line>
                  <rect x="1" y="2.5" width="18" height="15" rx="2.5" />
                  <path d="M7.5 2.5v15" />
                  <path d="M3.5 6h1.5M3.5 8.7h1.5M3.5 11.4h1.5" strokeWidth="1" />
                </Line>
              </Tool>
              <Divider />
              <Tool $w={9} aria-label="Tab groups">
                <Line w={9} h={6}><path d="M1.2 1.3l3.3 3.3 3.3-3.3" /></Line>
              </Tool>
              <Tool $w={50} aria-label="Back">
                <Line w={9} h={17}><path d="M7.5 1.5L1.5 8.5l6 7" /></Line>
              </Tool>
              <ToolGroup $gap={17}>
                <Tool $w={24} aria-label="Privacy report">
                  <svg width="15" height="18" viewBox="0 0 15 18" aria-hidden="true">
                    <path d="M7.5 1L14 3.4v5.8c0 3.6-2.6 6.2-6.5 8C3.6 15.4 1 12.8 1 9.2V3.4z" fill="#fff" stroke="#6b6b6b" strokeWidth="1.5" />
                    <path d="M7.5 1v16.2C3.6 15.4 1 12.8 1 9.2V3.4z" fill="#6b6b6b" />
                  </svg>
                </Tool>
                <Tool aria-label="Reference manager">
                  <svg width="20" height="20" viewBox="0 0 20 20" aria-hidden="true">
                    <rect x=".5" y=".5" width="19" height="19" rx="2.5" fill="#fff" stroke="#e4e4e4" />
                    <path d="M2.5 3.5H9V7L8 8v4l1 1v3.500H2.500V13L4 12V8L2.500 7z" fill="#1f4a3c" />
                    <path d="M11 3.500h6.500V7L16 8v4l1.500 1v3.500H11V13l1-1V8l-1-1z" fill="#1f2466" />
                    <path d="M7.500 7.500h5v5h-5z" fill="#2b3a55" />
                    <circle cx="10" cy="10" r="2.2" fill="#fff" />
                  </svg>
                </Tool>
                <Tool aria-label="Reader">
                  <svg width="18" height="20" viewBox="0 0 18 20" aria-hidden="true">
                    <path d="M0 18.5h18v1H0z" fill="#2b3a66" />
                    <rect x="2" y=".5" width="14" height="18.5" fill="#5a9bf8" stroke="#12398f" />
                    <rect x="4.5" y="2.5" width="9" height="5" fill="#0c3fa8" />
                    <rect x="6" y="4" width="6" height="1.5" fill="#1f6dff" />
                    <path d="M4.5 9.5h5M4.5 12h5M4.5 14.5h5M4.5 16.5h5M11.5 9.5h2" stroke="#d8e8ff" />
                    <rect x="11" y="11" width="3" height="6" fill="#d8e8ff" />
                  </svg>
                </Tool>
              </ToolGroup>
            </ToolGroup>
            <Address>
              <AddressText>
                <FaWordpress size={16} color="#1f6c9c" aria-hidden="true" />
                <AddressInput aria-label="Address" defaultValue="martinfleischmann.net" />
                <FaLock size={12} color="#8a8a8a" aria-hidden="true" />
              </AddressText>
              <ToolGroup $end $gap={8}>
                <Tool $w={14} aria-label="Show reader">
                  <Line w={14} h={18} sw={1.2}>
                    <rect x="1" y="1.5" width="11.5" height="15" rx="1.5" />
                    <path d="M4 5h5.5M4 7.5h5.5M4 10h3" strokeWidth="1" />
                  </Line>
                </Tool>
                <Tool $w={16} aria-label="Page settings">
                  <svg width="16" height="16" viewBox="0 0 16 16" aria-hidden="true">
                    <circle cx="8" cy="8" r="7.7" fill="#666" />
                    <path d="M4.2 8h.01M8 8h.01M11.8 8h.01" stroke="#fff" strokeWidth="1.8" strokeLinecap="round" />
                  </svg>
                </Tool>
              </ToolGroup>
            </Address>
            <ToolGroup $end $gap={17}>
              <Tool aria-label="Downloads">
                <Line sw={1.4}>
                  <circle cx="10" cy="10" r="8.5" />
                  <path d="M10 5.5v8.5M7 11l3 3 3-3" />
                </Line>
              </Tool>
              <Tool aria-label="New tab">
                <Line sw={1.4}><path d="M10 3.5v13M3.5 10h13" /></Line>
              </Tool>
              <Tool aria-label="Tab overview">
                <Line sw={1.4}>
                  <path d="M4.5 14.5H3A1.5 1.5 0 0 1 1.5 13V3A1.5 1.5 0 0 1 3 1.5h10A1.5 1.5 0 0 1 14.5 3v1" />
                  <rect x="5.5" y="5.5" width="13" height="13" rx="1.8" />
                </Line>
              </Tool>
            </ToolGroup>
          </Toolbar>

          <SiteHeader>
            <div>
              <SiteName href="#home">Martin Fleischmann</SiteName>
              <Tagline>Researcher in urban morphology and geographic data science</Tagline>
            </div>
            <Nav>
              <a href="#about">About me</a>
              <a href="#blog">Blog</a>
              <a href="#cv">CV</a>
              <a href="#python">Python</a>
              <a href="#github">GitHub</a>
            </Nav>
          </SiteHeader>
          <Entry>
            <Title>How to create a vector-based web map hosted on GitHub</Title>
          </Entry>

          <MapBox>
            <AreaMap />
            <Controls>
              <ControlGroup>
                <Control aria-label="Zoom in"><Line w={14} h={14} sw={2.4}><path d="M7 1.5v11M1.5 7h11" /></Line></Control>
                <Control aria-label="Zoom out"><Line w={14} h={14} sw={2.4}><path d="M1.5 7h11" /></Line></Control>
              </ControlGroup>
              <ControlGroup>
                <Control aria-label="Show my location"><FaLocationArrow size={15} /></Control>
              </ControlGroup>
            </Controls>
            <Scale>2 km</Scale>
            <Chip>Details</Chip>
            <Chip $low>Legend</Chip>
            <DarkMode>Dark Mode: Off</DarkMode>
          </MapBox>
        </Window>
      </Desktop>
    </>
  );
}
